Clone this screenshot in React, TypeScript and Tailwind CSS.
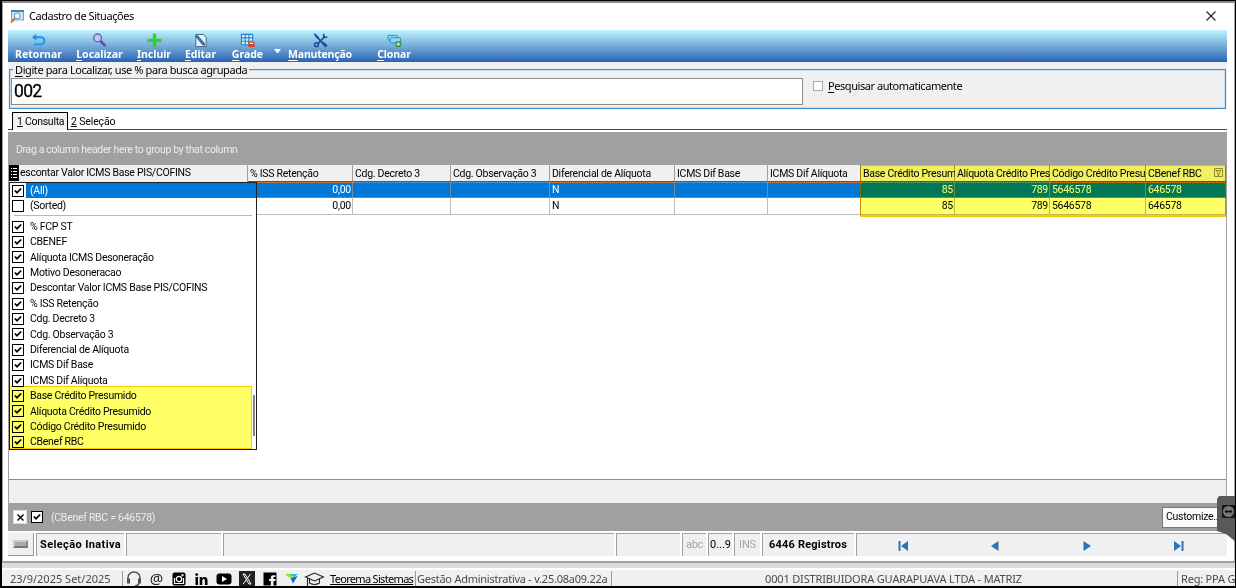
import type { ReactNode } from "react";
import clsx from "clsx";

const GRID_FONT = "font-[Roboto,'Liberation_Sans',sans-serif] text-[10.5px] tracking-[-0.28px]";

type Column = { title: string; width: string; right?: boolean; rows: [string, string] };

const columns: Column[] = [
  { title: "% ISS Retenção", width: "w-[105px]", right: true, rows: ["0,00", "0,00"] },
  { title: "Cdg. Decreto 3", width: "w-[98px]", rows: ["", ""] },
  { title: "Cdg. Observação 3", width: "w-[99px]", rows: ["", ""] },
  { title: "Diferencial de Alíquota", width: "w-[125px]", rows: ["N", "N"] },
  { title: "ICMS Dif Base", width: "w-[93px]", rows: ["", ""] },
  { title: "ICMS Dif Alíquota", width: "w-[93px]", rows: ["", ""] },
  { title: "Base Crédito Presum", width: "w-[94px]", right: true, rows: ["85", "85"] },
  { title: "Alíquota Crédito Pres", width: "w-[95px]", right: true, rows: ["789", "789"] },
  { title: "Código Crédito Presui", width: "w-[96px]", rows: ["5646578", "5646578"] },
  { title: "CBenef RBC", width: "w-[80px]", rows: ["646578", "646578"] },
];

const fields = [
  "% FCP ST",
  "CBENEF",
  "Alíquota ICMS Desoneração",
  "Motivo Desoneracao",
  "Descontar Valor ICMS Base PIS/COFINS",
  "% ISS Retenção",
  "Cdg. Decreto 3",
  "Cdg. Observação 3",
  "Diferencial de Alíquota",
  "ICMS Dif Base",
  "ICMS Dif Alíquota",
  "Base Crédito Presumido",
  "Alíquota Crédito Presumido",
  "Código Crédito Presumido",
  "CBenef RBC",
];

export default function App() {
  return (
    <div className="relative flex h-[588px] w-[1236px] flex-col overflow-hidden border border-b-2 border-l-2 border-black bg-white font-['Noto_Sans','Open_Sans',sans-serif] text-black">
      <div className="flex h-[562px] shrink-0 flex-col border-2 border-l border-r-[1px] border-[#a0a0a0] border-t-[#8a8a8a] pr-[7px] pl-[5px]">
        <TitleBar />
        <Toolbar />
        <SearchBox />
        <Tabs />
        <Grid />
        <StatusBar />
      </div>
      <AppBar />
      <RemoteHandle />
    </div>
  );
}

function TitleBar() {
  return (
    <header className="flex h-[27px] shrink-0 items-center px-[2px]">
      <svg width="14" height="15" viewBox="0 0 14 15" className="mb-px">
        <rect x="1.5" y="1.5" width="12" height="9.5" fill="#cfe6f5" stroke="#7f9fb8" />
        <path d="M1 2h13" stroke="#3c83c4" strokeWidth="2" />
        <circle cx="7.3" cy="6.8" r="3" fill="#e9f8ff" stroke="#6c8da6" />
        <path d="M4.8 9.4 1 13.5" stroke="#b8763a" strokeWidth="2" />
      </svg>
      <h1 className="ml-[5px] text-[11px] tracking-[-0.45px]">Cadastro de Situações</h1>
      <svg width="10" height="10" viewBox="0 0 10 10" className="mr-[9px] mb-px ml-auto" stroke="#222" strokeWidth="1.1">
        <path d="M.5.5l9 9M9.5.5l-9 9" />
      </svg>
    </header>
  );
}

function Toolbar() {
  return (
    <nav className="flex h-[32px] shrink-0 bg-linear-to-b from-[#bff4ff] via-[#76acd8] to-[#2b62b4] pl-[3px]">
      <Tool label="Retornar" plain className="w-[55px]">
        <path d="M3 4.5h7.5a3.8 3.8 0 0 1 0 7.6H3" fill="none" stroke="#1496f0" strokeWidth="2" />
        <path d="M1 4.5 5.5.8v7.4z" fill="#1496f0" />
      </Tool>
      <Tool label="Localizar" className="w-[67px]">
        <path d="m9 8.5 5.5 5.5" stroke="#5a50a8" strokeWidth="2.8" />
        <circle cx="6" cy="5.2" r="4.1" fill="#bfc9f0" stroke="#6a62b8" strokeWidth="1.5" />
      </Tool>
      <Tool label="Incluir" className="w-[42px]">
        <path d="M6.2.5h3.6v5.7h5.7v3.4H9.8v5.9H6.2V9.6H.5V6.2h5.7z" fill="#32d22d" />
      </Tool>
      <Tool label="Editar" className="w-[51px]">
        <path d="M3 1.5h8l3 3v10H3z" fill="#e4f1fa" stroke="#4c5f70" />
        <path d="m3 3.5 1.4-1.2 7.3 8.2.8 2.6-2.4-.8z" fill="#2e83dc" stroke="#154b86" strokeWidth=".9" />
      </Tool>
      <Tool label="Grade" className="w-[43px]">
        <path d="M1.5 1.5h12v11h-12zM5.5 1v11.5M9.5 1v11.5M1 5.2h13M1 8.8h13" fill="#d5f2fc" stroke="#2184c7" strokeWidth="1.2" />
        <path d="M9 9.5h6.5V15H9z" fill="#e33b26" />
        <path d="M10.5 11h3.5" stroke="#fff" strokeWidth="1.4" />
      </Tool>
      <span className="mt-[19px] ml-[5px] h-0 w-[7px] border-x-[3.5px] border-t-[4px] border-x-transparent border-t-white" />
      <Tool label="Manutenção" className="w-[78px] tracking-[-0.2px]">
        <path d="m2.5 2.5 10.5 11M12.5 4 5 11.5" stroke="#174f9f" strokeWidth="1.8" />
        <path d="M1.5 1 6 5.5M11.5.8v3.7h3.8" fill="none" stroke="#174f9f" strokeWidth="1.8" />
        <circle cx="3.7" cy="12.5" r="2" fill="none" stroke="#174f9f" strokeWidth="1.6" />
        <path d="m10.5 10.5 4 4" stroke="#174f9f" strokeWidth="3" />
      </Tool>
      <Tool label="Clonar" className="ml-[13px] w-[44px] tracking-[-0.1px]">
        <rect x="1" y="2.5" width="10" height="5" rx="1" fill="#8ad8f4" stroke="#258cc4" />
        <rect x="3.5" y="5" width="11" height="5.5" rx="1" fill="#8ad8f4" stroke="#258cc4" />
        <circle cx="12" cy="11.8" r="3.4" fill="#369446" />
        <path d="M10 11.8h4M12 9.8v4" stroke="#fff" />
      </Tool>
    </nav>
  );
}

function Tool({ label, plain, className, children }: { label: string; plain?: boolean; className: string; children: ReactNode }) {
  return (
    <button className={clsx("flex shrink-0 flex-col items-center pt-[3px]", className)}>
      <svg width="15" height="15" viewBox="0 0 16 16">{children}</svg>
      <span className="text-[10.5px] leading-[13px] font-bold whitespace-nowrap text-white">
        {plain ? label : <Hotkey text={label} />}
      </span>
    </button>
  );
}

function Hotkey({ text }: { text: string }) {
  return (
    <>
      <u className="underline-offset-2">{text[0]}</u>
      {text.slice(1)}
    </>
  );
}

function SearchBox() {
  return (
    <section className="h-[47px] shrink-0 bg-[#f0f0f0] pt-[7px]">
      <div className="relative mx-px flex h-[40px] border border-[#3f8fd3] pt-[8px] pl-px shadow-[inset_0_0_0_1px_#c5def2]">
        <span className="absolute top-[-7px] left-[3px] bg-[#f0f0f0] px-[2px] text-[11px] leading-[13px] tracking-[-0.41px] whitespace-nowrap">
          <Hotkey text="Digite para Localizar, use % para busca agrupada" />
        </span>
        <div className="flex h-[27px] w-[792px] items-center border border-[#8c8c8c] bg-white pl-[2px] font-[Roboto,sans-serif] text-[17.5px] tracking-[-0.7px] [-webkit-text-stroke:0.3px_#000]">
          002
        </div>
        <label className="ml-[10px] flex h-[16px] items-center text-[11px] tracking-[-0.44px]">
          <span className="mr-[5px] size-[10px] border border-[#aaa] bg-white" />
          <span className="whitespace-nowrap">
            <Hotkey text="Pesquisar automaticamente" />
          </span>
        </label>
      </div>
    </section>
  );
}

function Tabs() {
  return (
    <div className={clsx("flex h-[21px] shrink-0 items-end border-b border-[#444] pl-[4px]", GRID_FONT)}>
      <span className="mb-[-1px] flex h-[18px] w-[56px] items-center border border-b-0 border-black bg-[#f3f3f3] pt-px pl-[4px] whitespace-nowrap">
        <u>1</u>&nbsp;Consulta
      </span>
      <span className="flex h-[16px] items-center pt-px pl-[3px] tracking-[-0.15px]">
        <u>2</u>&nbsp;Seleção
      </span>
    </div>
  );
}

function Grid() {
  return (
    <main className={clsx("mt-[2px] flex h-[399px] shrink-0 flex-col border-x border-[#a0a0a0]", GRID_FONT)}>
      <div className="flex h-[33px] shrink-0 items-center bg-[#a0a0a0] pt-[2px] pl-[7px] tracking-[-0.35px] text-[#ececec]">
        Drag a column header here to group by that column
      </div>
      <div className="relative flex h-[314px] shrink-0 overflow-hidden">
        <div className="h-[17px] w-[239px] shrink-0 border-r border-[#a0a0a0] bg-[#f0f0f0]">
          <div className="flex h-[16px] items-center">
            <span className="flex h-[16px] w-[10px] items-center justify-center bg-black">
              <svg width="6" height="10" viewBox="0 0 6 10" stroke="#fff">
                <path d="M0 .5h1M2 .5h4M0 3.5h1M2 3.5h4M0 6.5h1M2 6.5h4M0 9.5h1M2 9.5h4" />
              </svg>
            </span>
            <span className="ml-px whitespace-nowrap">escontar Valor ICMS Base PIS/COFINS</span>
          </div>
        </div>
        {columns.map((col) => (
          <GridColumn key={col.title} {...col} />
        ))}
        {/* highlight over the last four columns */}
        <div className="pointer-events-none absolute top-0 left-[851px] h-[52px] w-[366px] border border-b-2 border-[#ffc800] bg-[#ffff66] mix-blend-multiply" />
        <ColumnChooser />
      </div>
      <div className="h-[24px] shrink-0 border-t border-[#8c8c8c] bg-[#f0f0f0]" />
      <div className="flex h-[28px] shrink-0 items-center bg-[#a0a0a0] pl-[4px]">
        <span className="flex size-[14px] items-center justify-center border border-[#ddd] bg-white">
          <svg width="7" height="7" viewBox="0 0 7 7" stroke="#000" strokeWidth="1.4">
            <path d="m.5.5 6 6m0-6-6 6" />
          </svg>
        </span>
        <CheckBox checked className="ml-[4px]" />
        <span className="mt-px ml-[8px] text-[#ececec]">(CBenef RBC = 646578)</span>
        <button className="ml-auto flex h-[21px] w-[64px] items-center border border-[#777] bg-[#fafafa] pl-[3px]">
          Customize...
        </button>
      </div>
    </main>
  );
}

function GridColumn({ title, width, right, rows }: Column) {
  return (
    <div className={clsx("flex shrink-0 flex-col", width)}>
      <div className="flex h-[17px] items-center border-r border-b border-[#a0a0a0] border-b-[#555] bg-[#f0f0f0] pt-px pl-[2px] whitespace-nowrap">
        <span>{title}</span>
        {title === "CBenef RBC" && (
          <svg width="9" height="9" viewBox="0 0 9 9" className="mr-[2px] mb-[2px] ml-auto" fill="none" stroke="#888">
            <path d="M.5.5h8v8h-8zM2 2.5h5L5 5v2.5H4V5z" />
          </svg>
        )}
      </div>
      <div className="h-px bg-[repeating-linear-gradient(90deg,#e08040_0_1px,#3c7fb5_1px_2px)]" />
      <div className={clsx("flex h-[14px] items-center border-r border-[#7c8a99] bg-[#0078d7] px-[2px] text-white", right && "justify-end pr-px")}>
        {rows[0]}
      </div>
      <div className="h-px bg-[repeating-linear-gradient(90deg,#e08040_0_1px,#3c7fb5_1px_2px)]" />
      <div className={clsx("flex h-[17px] items-center border-r border-b border-[#bdbdbd] px-[2px]", right && "justify-end pr-px")}>
        {rows[1]}
      </div>
    </div>
  );
}

function ColumnChooser() {
  return (
    <div className="absolute top-[17px] left-0 h-[268px] w-[248px] border border-[#222] bg-white">
      <div className="flex h-[15px] items-center pl-[2px]">
        <CheckBox checked />
        <span className="ml-[2px] flex h-[15px] flex-1 items-center bg-[#0078d7] pl-[4px] text-white">(All)</span>
      </div>
      <div className="flex h-[16px] items-center pl-[2px]">
        <CheckBox />
        <span className="ml-[6px]">(Sorted)</span>
      </div>
      <div className="mx-[4px] mt-px mb-[3px] h-px bg-[#b8b8b8]" />
      {fields.map((field) => (
        <div key={field} className="flex h-[15.4px] items-center pl-[2px]">
          <CheckBox checked />
          <span className="ml-[6px] whitespace-nowrap">{field}</span>
        </div>
      ))}
      <div className="absolute right-px bottom-[13px] h-[41px] w-[2px] bg-[#858585]" />
      <div className="pointer-events-none absolute top-[203px] left-[-1px] h-[64px] w-[243px] border border-b-2 border-[#ffc800] bg-[#ffff66] mix-blend-multiply" />
    </div>
  );
}

function CheckBox({ checked, className }: { checked?: boolean; className?: string }) {
  return (
    <span className={clsx("flex size-[12px] shrink-0 items-center justify-center border border-black bg-white", className)}>
      {checked && (
        <svg width="8" height="8" viewBox="0 0 8 8" fill="none" stroke="#000" strokeWidth="1.7">
          <path d="m.8 3.5 2.2 2.2 4.2-4.2" />
        </svg>
      )}
    </span>
  );
}

function StatusBar() {
  return (
    <footer className="mt-[2px] flex h-[23px] shrink-0 gap-[2px] bg-white font-[Roboto,sans-serif] text-[11px]">
      <div className="flex w-[26px] items-center justify-center border-r border-b border-[#999] bg-[#f0f0f0]">
        <span className="h-[8px] w-[15px] border-2 border-t-[#ccc] border-r-[#888] border-b-[#777] border-l-[#ccc] bg-[#aaa]" />
      </div>
      <Panel className="w-[88px] pl-[3px] font-bold tracking-[0.38px]">Seleção Inativa</Panel>
      <Panel className="w-[95px]" />
      <Panel className="w-[391px]" />
      <Panel className="w-[64px]" />
      <Panel className="w-[24px] justify-center tracking-[-0.3px] text-[#a5a5a5]">abc</Panel>
      <Panel className="w-[24px] justify-center">0...9</Panel>
      <Panel className="w-[26px] justify-center tracking-[-0.2px] text-[#a5a5a5]">INS</Panel>
      <Panel className="w-[92px] pl-[6px] font-bold tracking-[0.2px]">6446 Registros</Panel>
      <Panel className="flex-1 justify-around pr-[2px] text-[#2e74b5]">
        <svg width="10" height="10" viewBox="0 0 10 10" fill="currentColor">
          <path d="M.5 0h2v10h-2zM10 0v10L3 5z" />
        </svg>
        <svg width="8" height="10" viewBox="0 0 8 10" fill="currentColor" className="mr-[2px]">
          <path d="M7.5 0v10L0 5z" />
        </svg>
        <svg width="8" height="10" viewBox="0 0 8 10" fill="currentColor">
          <path d="M.5 0v10L8 5z" />
        </svg>
        <svg width="10" height="10" viewBox="0 0 10 10" fill="currentColor">
          <path d="M7.5 0h2v10h-2zM0 0v10l7-5z" />
        </svg>
      </Panel>
    </footer>
  );
}

function Panel({ className, children }: { className?: string; children?: ReactNode }) {
  return (
    <div className={clsx("flex shrink-0 items-center border-t border-l border-[#a0a0a0] bg-[#f0f0f0] pt-px whitespace-nowrap", className)}>
      {children}
    </div>
  );
}

function AppBar() {
  return (
    <div className="flex h-[23px] shrink-0 items-end border-t-[5px] border-[#dcdcdc] bg-white text-[11px] text-[#4a4a4a]">
      <div className="flex h-[16px] w-full items-center bg-[#f0f0f0] pt-[2px]">
        <span className="flex h-[16px] w-[121px] shrink-0 items-center border-r border-[#999] pl-[8px] whitespace-nowrap">23/9/2025 Set/2025</span>
        <div className="flex h-[16px] w-[205px] shrink-0 items-center gap-[7px] pl-[3px]">
          <svg width="16" height="16" viewBox="0 0 16 16" fill="none" stroke="#4c5158" strokeWidth="1.4">
            <path d="M2 9V6.5a6 5.5 0 0 1 12 0V9M13 12c-.5 2-2 3-4 3" />
            <path d="M2.5 7.5v5M13.5 7.5v5" strokeWidth="3" />
          </svg>
          <span className="mb-[3px] flex w-[15px] justify-center text-[15px] leading-[16px] text-[#222]">@</span>
          <svg width="14" height="14" viewBox="0 0 14 14" className="ml-px">
            <rect x=".5" y=".5" width="13" height="13" rx="2" />
            <path d="M2.5 6v5.5h9V6" fill="none" stroke="#fff" strokeWidth="1.2" />
            <circle cx="7" cy="7" r="2.7" fill="none" stroke="#fff" strokeWidth="1.3" />
            <path d="M9.5 2.2h2v2h-2z" fill="#fff" />
          </svg>
          <svg width="15" height="14" viewBox="0 0 14 14" className="ml-px">
            <path d="M1 5h2.5v8H1zM5.2 5h2.4v1.2C9 4.2 13 4.4 13 8v5h-2.6V8.5c0-2.2-2.6-2-2.6 0V13H5.2z" />
            <circle cx="2.2" cy="2.6" r="1.4" />
          </svg>
          <svg width="16" height="12" viewBox="0 0 16 12">
            <rect x=".5" y=".5" width="15" height="11" rx="3" />
            <path d="m6 3 5 3-5 3z" fill="#fff" />
          </svg>
          <svg width="16" height="16" viewBox="0 0 16 16">
            <path d="M0 0h16v16H0z" fill="#222" />
            <path d="M4 3h2l6 10h-2zM11.5 3 4.2 13" fill="none" stroke="#fff" />
          </svg>
          <svg width="14" height="14" viewBox="0 0 14 14" className="ml-px">
            <path d="M.5.5h13v13h-3V9h2V7h-2V5h2V3.2h-2.5Q7.8 3.2 7.8 5.5V7H6v2h1.8v4.5H.5z" />
          </svg>
          <svg width="13" height="12" viewBox="0 0 13 12" className="mx-px">
            <path d="M0 1h6l2 3-3 1z" fill="#82e827" />
            <path d="M5 1h8L9 4z" fill="#21b8ea" />
            <path d="M12.5 3 8 10.5 5.5 5z" fill="#1769d2" />
          </svg>
          <svg width="21" height="16" viewBox="0 0 20 16" fill="#f0f0f0" stroke="#222" strokeWidth="1.1" className="ml-[-2px] shrink-0">
            <path d="M5 7v5q5 3 10 0V7" />
            <path d="m1 6 9-4 9 4-9 4zM3 7v8" />
          </svg>
        </div>
        <span className="ml-[2px] w-[85px] shrink-0 text-[11px] tracking-[-0.68px] whitespace-nowrap text-black underline">Teorema Sistemas</span>
        <span className="flex h-[16px] w-[197px] shrink-0 items-center border-x border-[#999] pl-px tracking-[-0.25px] whitespace-nowrap">Gestão Administrativa - v.25.08a09.22a</span>
        <span className="flex-1 pr-[2px] text-center tracking-[-0.16px]">0001 DISTRIBUIDORA GUARAPUAVA LTDA - MATRIZ</span>
        <span className="flex h-[16px] w-[58px] shrink-0 items-center border-l border-[#999] pl-[3px] tracking-[-0.2px] whitespace-nowrap">Reg: PPA G</span>
      </div>
    </div>
  );
}

// Collapsed remote session tab docked at the window edge
function RemoteHandle() {
  return (
    <svg width="20" height="48" viewBox="0 0 20 48" className="absolute top-[495px] right-[-1px]">
      <path d="M3 0h17v46L10 38 1 35V3z" fill="#595959" />
      <rect x="6" y="9" width="14" height="13" rx="1" fill="#10152a" />
      <circle cx="12.5" cy="15.5" r="5.5" fill="#777" />
      <path d="m8.5 15.5 2.5-2v1.2h3v-1.2l2.5 2-2.5 2v-1.2h-3v1.2z" fill="#111" />
    </svg>
  );
}
